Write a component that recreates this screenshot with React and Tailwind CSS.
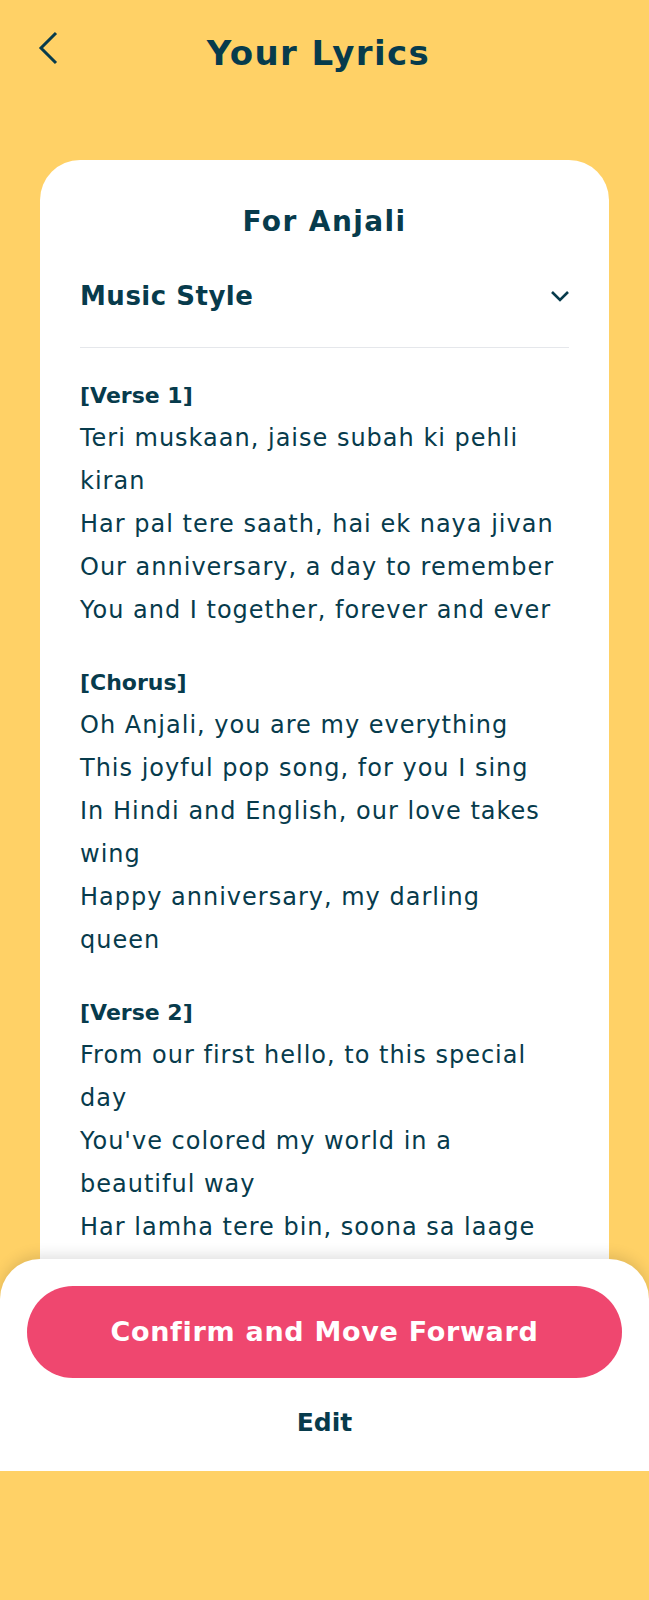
import React from "react";

const sections = [
  {
    title: "[Verse 1]",
    lines: [
      "Teri muskaan, jaise subah ki pehli\nkiran",
      "Har pal tere saath, hai ek naya jivan",
      "Our anniversary, a day to remember",
      "You and I together, forever and ever",
    ],
  },
  {
    title: "[Chorus]",
    lines: [
      "Oh Anjali, you are my everything",
      "This joyful pop song, for you I sing",
      "In Hindi and English, our love takes\nwing",
      "Happy anniversary, my darling\nqueen",
    ],
  },
  {
    title: "[Verse 2]",
    lines: [
      "From our first hello, to this special\nday",
      "You've colored my world in a\nbeautiful way",
      "Har lamha tere bin, soona sa laage",
    ],
  },
];

const font = { fontFamily: "'DejaVu Sans', sans-serif" };

export default function App() {
  return (
    <div className="min-h-[1600px] w-full bg-[#FFD166] text-[#073B4C]">
      <div className="relative h-[1471px] overflow-hidden flex flex-col">
        {/* Header */}
        <div className="relative h-[160px] shrink-0">
          <button className="absolute left-[36px] top-[30px] p-0" aria-label="Back">
            <svg width="24" height="36" viewBox="0 0 24 36" fill="none">
              <path d="M20 3 L5 18 L20 33" stroke="#073B4C" strokeWidth="3" />
            </svg>
          </button>
          <h1 className="pt-[31px] pr-[12px] text-center text-[34px] leading-[44px] font-bold tracking-[1.4px]" style={font}>
            Your Lyrics
          </h1>
        </div>

        {/* Card */}
        <div className="mx-10 min-h-[1400px] shrink-0 rounded-[40px] bg-white px-10 pt-[42px] pb-10">
          <h2 className="text-center text-[28px] leading-[40px] font-bold tracking-[1.4px]" style={font}>
            For Anjali
          </h2>
          <div className="mt-[34px] flex h-[40px] items-center justify-between">
            <span className="text-[26px] leading-[40px] font-bold tracking-[0.5px]" style={font}>
              Music Style
            </span>
            <svg width="22" height="14" viewBox="0 0 22 14" fill="none" className="mr-[-2px]">
              <path d="M3 3 L11 11 L19 3" stroke="#073B4C" strokeWidth="2.6" />
            </svg>
          </div>
          <div className="mt-[31px] border-t border-[#e5e7eb]" />
          <div className="mt-[26px] text-[24px] leading-[43px] tracking-[1px] whitespace-pre-line" style={font}>
            {sections.map((s, i) => (
              <div key={s.title} className={i > 0 ? "mt-[29px]" : ""}>
                <div className="text-[22px] font-bold tracking-[0px]">{s.title}</div>
                {s.lines.map((l) => (
                  <div key={l}>{l}</div>
                ))}
              </div>
            ))}
          </div>
        </div>

        {/* Bottom sheet */}
        <div className="absolute bottom-0 left-0 right-0 h-[212px] rounded-t-[40px] bg-white px-[27px] pt-[27px] shadow-[0_-4px_14px_rgba(0,0,0,0.12)]">
          <button
            className="flex h-[92px] w-full items-center justify-center rounded-full bg-[#EF476F] text-[27px] font-bold tracking-[0.7px] text-white"
            style={font}
          >
            Confirm and Move Forward
          </button>
          <div className="mt-[30px] text-center text-[25px] leading-[30px] font-bold" style={font}>
            Edit
          </div>
        </div>
      </div>
    </div>
  );
}
